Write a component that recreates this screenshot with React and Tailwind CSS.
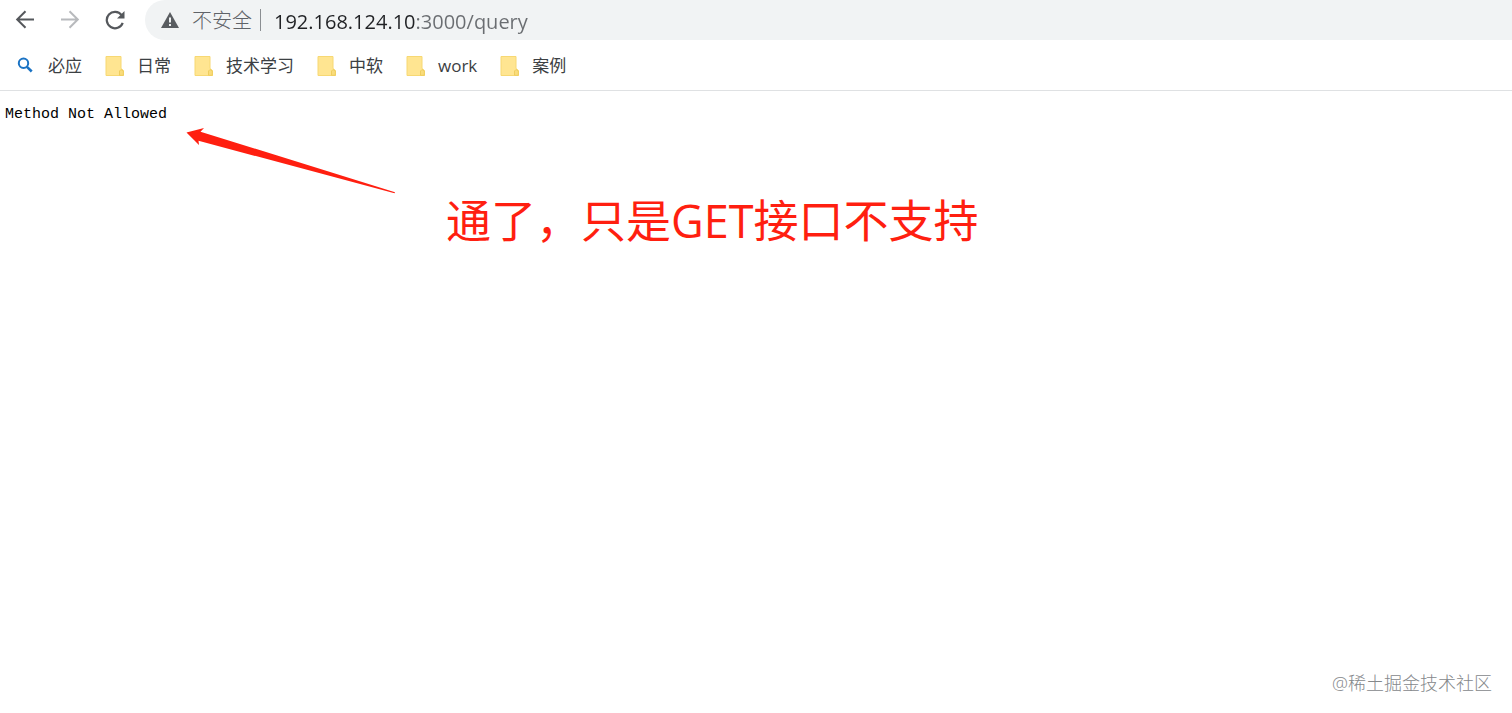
const folders = ['日常', '技术学习', '中软', 'work', '案例'];

function FolderIcon() {
  return (
    <svg aria-hidden="true" viewBox="0 0 20 22" className="h-[22px] w-5 shrink-0">
      <path d="M1 1.5H16V13.5L18.5 15.5V20.5H1Z" fill="#ffe591" stroke="#f7d873" strokeWidth="1" strokeLinejoin="round" />
      <path d="M14.5 20.3V16L16 14.5L18.3 16V20.3Z" fill="#f9dc7c" stroke="#efcd5e" strokeWidth="1" />
    </svg>
  );
}

function Toolbar() {
  return (
    <div className="flex h-10 items-center">
      <nav aria-label="导航" className="flex shrink-0 items-center gap-[25px] pl-[15px] pr-5">
        <button type="button" aria-label="后退" className="h-5 w-5">
          <svg viewBox="0 0 20 20" className="h-5 w-5" fill="none" stroke="#55585c" strokeWidth="2">
            <path d="M19 9.5H2.5M10.5 1.2L2.2 9.5L10.5 17.8" />
          </svg>
        </button>
        <button type="button" aria-label="前进" className="h-5 w-5">
          <svg viewBox="0 0 20 20" className="h-5 w-5" fill="none" stroke="#b8babd" strokeWidth="2">
            <path d="M1 9.5H17.5M9.5 1.2L17.8 9.5L9.5 17.8" />
          </svg>
        </button>
        <button type="button" aria-label="重新加载" className="h-5 w-5">
          <svg viewBox="0 0 20 20" className="h-5 w-5" fill="none">
            <path d="M16.6 5.2A8.2 8.2 0 1 0 17.7 12.8" stroke="#55585c" strokeWidth="2.2" />
            <path d="M19.5 1V8.5H12Z" fill="#55585c" />
          </svg>
        </button>
      </nav>
      <div className="flex h-10 min-w-0 flex-1 items-center rounded-l-full bg-[#f1f3f4] pl-4">
        <svg aria-hidden="true" viewBox="0 0 18 16" className="h-4 w-[18px] shrink-0">
          <path d="M9 0L18 16H0Z" fill="#5a5d61" />
          <path d="M8 5.5H10V10.5H8ZM8 12H10V14H8Z" fill="#f1f3f4" />
        </svg>
        <label htmlFor="url" className="ml-[13px] shrink-0 pt-0.5 text-[20px] leading-6 font-light text-[#5f6368]">
          不安全
        </label>
        <span className="ml-2 h-[22px] w-px shrink-0 bg-[#8b8e92]" />
        <input
          id="url"
          type="text"
          defaultValue="192.168.124.10:3000/query"
          className="ml-[13px] h-8 min-w-0 flex-1 bg-[linear-gradient(to_right,#202124_142px,#6a6d71_142px)] bg-clip-text pt-0.5 text-[20px] text-transparent caret-black outline-none"
        />
      </div>
    </div>
  );
}

function Bookmarks() {
  return (
    <nav aria-label="书签" className="flex h-[51px] items-center gap-[23px] border-b border-[#dfe1e3] pt-0.5 pl-[17px] text-[17px] leading-6 text-[#3c4043]">
      <a href="#bing" className="flex items-center gap-[13px]">
        <svg aria-hidden="true" viewBox="0 0 18 18" className="h-[18px] w-[18px]" fill="none" stroke="#1a73c4">
          <circle cx="6.5" cy="6.2" r="4.7" strokeWidth="2" />
          <path d="M10 9.8L14.7 14.5" strokeWidth="2.6" />
        </svg>
        必应
      </a>
      {folders.map((name) => (
        <a key={name} href={`#${name}`} className="flex items-center gap-3">
          <FolderIcon />
          {name}
        </a>
      ))}
    </nav>
  );
}

export default function App() {
  return (
    <div className="relative flex min-h-screen flex-col bg-white font-['Open_Sans','Noto_Sans_CJK_SC',sans-serif]">
      <header>
        <Toolbar />
        <Bookmarks />
      </header>
      <main className="flex-1 px-[5px] pt-[14px]">
        <pre className="font-['Liberation_Mono',monospace] text-[15px] leading-5 text-black">Method Not Allowed</pre>
      </main>
      <svg aria-hidden="true" viewBox="0 0 210 68" className="absolute top-[127px] left-[186px] h-[68px] w-[210px]">
        <path d="M0.5 5.5L18 1L14.5 4.7L209 65.3L208.5 66.3L12.5 13.7L13 18Z" fill="#ff1f10" />
      </svg>
      <p className="absolute top-[189px] left-[446px] text-[45px] leading-16 whitespace-nowrap text-[#ff1f10]">
        通了，只是GET接口不支持
      </p>
      <footer className="absolute right-5 bottom-[18px] text-[18px] leading-6 font-light text-[#85888b]">@稀土掘金技术社区</footer>
    </div>
  );
}
